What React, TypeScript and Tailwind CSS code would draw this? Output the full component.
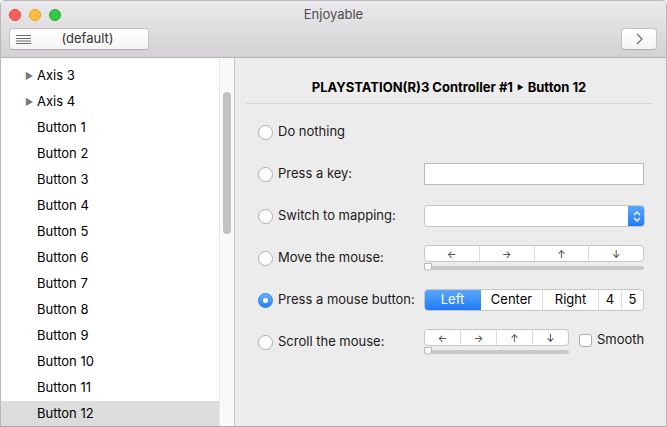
import React from 'react';

const FONT = { fontFamily: 'Inter, "Noto Sans", "Liberation Sans", sans-serif' };

const items = ['Axis 3', 'Axis 4', ...Array.from({ length: 12 }, (_, i) => `Button ${i + 1}`)];

function Radio({ on }: { on?: boolean }) {
  if (on) {
    return (
      <span className="flex h-[15px] w-[15px] shrink-0 items-center justify-center rounded-full bg-gradient-to-b from-[#69b1fd] to-[#1f7ff6] border border-[#2f86f4]">
        <span className="h-[5px] w-[5px] rounded-full bg-white" />
      </span>
    );
  }
  return <span className="h-[15px] w-[15px] shrink-0 rounded-full border border-[#adadad] bg-white" />;
}

function Slider({ width }: { width: string }) {
  return (
    <div className={`relative mt-[3px] h-[6px] ${width}`}>
      <div className="absolute left-0 right-0 top-[1px] h-[4px] rounded-full bg-[#c9c9c9]" />
      <div className="absolute left-0 top-[-2px] h-[8px] w-[8px] rounded-[2px] rounded-b-full border border-[#b8b8b8] bg-white" />
    </div>
  );
}

function Arrows({ width }: { width: string }) {
  return (
    <div className={`flex h-[17px] ${width} overflow-hidden rounded-[4px] border border-[#c6c6c6] bg-white text-[10px] leading-none text-[#333]`}>
      {['←', '→', '↑', '↓'].map((a, i) => (
        <div key={a} className={`flex flex-1 items-center justify-center ${i > 0 ? 'border-l border-[#dcdcdc]' : ''}`}>
          {a}
        </div>
      ))}
    </div>
  );
}

function Row({ label, on, children }: { label: string; on?: boolean; children?: React.ReactNode }) {
  return (
    <div className="flex h-[42px] items-center">
      <div className="flex w-[166px] items-center gap-[5px]">
        <Radio on={on} />
        <span>{label}</span>
      </div>
      {children}
    </div>
  );
}

export default function App() {
  return (
    <div className="h-[427px] w-[667px] overflow-hidden bg-white text-[13px] text-[#1a1a1a]" style={FONT}>
      <div className="flex h-full flex-col overflow-hidden rounded-t-[5px] border border-b-[#a9a9a9] border-[#b9b9b9]">
        {/* title bar + toolbar */}
        <div className="h-[57px] shrink-0 border-b border-[#b1b1b1] bg-gradient-to-b from-[#ebe9eb] to-[#d3d1d3]">
          <div className="relative flex h-[27px] items-center justify-center">
            <div className="absolute left-[8px] top-[8px] flex gap-[8px]">
              <span className="h-[12px] w-[12px] rounded-full border border-[#e2463f] bg-[#fc605c]" />
              <span className="h-[12px] w-[12px] rounded-full border border-[#e1a116] bg-[#fdbc40]" />
              <span className="h-[12px] w-[12px] rounded-full border border-[#2aa831] bg-[#34c84a]" />
            </div>
            <span className="mt-[1px] text-[13px] text-[#4c4c4c]">Enjoyable</span>
          </div>
          <div className="flex items-center justify-between pl-[8px] pr-[9px]">
            <div className="flex h-[22px] w-[140px] items-center rounded-[4px] border border-[#c4c4c4] border-b-[#b0b0b0] bg-gradient-to-b from-[#ffffff] to-[#f4f4f4] px-[6px]">
              <svg width="15" height="9" viewBox="0 0 15 9" className="shrink-0">
                <path d="M0 0.5H15M0 3.5H15M0 6H15M0 8.5H15" stroke="#6b6b6b" strokeWidth="1" />
              </svg>
              <span className="flex-1 pl-[2px] text-center text-[#333]">(default)</span>
            </div>
            <div className="flex h-[22px] w-[36px] items-center justify-center rounded-[4px] border border-[#c4c4c4] border-b-[#b0b0b0] bg-gradient-to-b from-[#ffffff] to-[#f4f4f4]">
              <svg width="7" height="12" viewBox="0 0 7 12">
                <path d="M1 1L6 6L1 11" fill="none" stroke="#6b6b6b" strokeWidth="1.2" />
              </svg>
            </div>
          </div>
        </div>

        {/* body */}
        <div className="flex min-h-0 flex-1">
          <div className="flex w-[234px] shrink-0 border-r border-[#c8c8c8]">
            <div className="w-[218px] pt-[5px]">
              {items.map((it, i) => {
                const sel = i === items.length - 1;
                return (
                  <div key={it} className={`flex h-[26px] shrink-0 items-center pl-[24px] ${sel ? 'bg-[#dcdcdc]' : ''}`}>
                    <span className="w-[12px] text-[9px] text-[#7a7a7a]">{it.startsWith('Axis') ? '▶' : ''}</span>
                    <span className="text-black">{it}</span>
                  </div>
                );
              })}
            </div>
            <div className="flex w-[15px] justify-center border-l border-[#e9e9e9] bg-[#f9f9f9] pt-[34px]">
              <div className="h-[142px] w-[8px] rounded-full bg-[#c2c2c2]" />
            </div>
          </div>

          <div className="flex-1 bg-[#ececec] pl-[11px] pr-[14px]">
            <div className="flex h-[46px] items-end justify-center border-b border-[#d6d6d6] pb-[6px] font-bold text-black">
              PLAYSTATION(R)3 Controller #1 <span className="mx-[4px] text-[7px] leading-[18px]">▶</span> Button 12
            </div>
            <div className="pl-[12px] pt-[7px]">
              <Row label="Do nothing" />
              <Row label="Press a key:">
                <div className="h-[22px] w-[220px] border border-[#b9b9b9] bg-white" />
              </Row>
              <Row label="Switch to mapping:">
                <div className="flex h-[22px] w-[221px] overflow-hidden rounded-[4px] border border-[#c6c6c6] bg-white">
                  <div className="flex-1" />
                  <div className="-my-px -mr-px flex w-[17px] items-center justify-center rounded-r-[4px] bg-gradient-to-b from-[#5ba8fc] to-[#1b78f5]">
                    <svg width="8" height="13" viewBox="0 0 8 13">
                      <path d="M1 5L4 2L7 5M1 8L4 11L7 8" fill="none" stroke="white" strokeWidth="1.3" />
                    </svg>
                  </div>
                </div>
              </Row>
              <Row label="Move the mouse:">
                <div className="flex flex-col">
                  <Arrows width="w-[220px]" />
                  <Slider width="w-[220px]" />
                </div>
              </Row>
              <Row label="Press a mouse button:" on>
                <div className="flex h-[22px] w-[220px] overflow-hidden rounded-[4px] border border-[#c6c6c6] bg-white text-black">
                  <div className="-my-px -ml-px flex w-[57px] items-center justify-center rounded-l-[4px] bg-gradient-to-b from-[#5ba8fc] to-[#1b78f5] text-white">Left</div>
                  <div className="flex w-[61px] items-center justify-center">Center</div>
                  <div className="flex w-[56px] items-center justify-center border-l border-[#dcdcdc]">Right</div>
                  <div className="flex w-[23px] items-center justify-center border-l border-[#dcdcdc]">4</div>
                  <div className="flex flex-1 items-center justify-center border-l border-[#dcdcdc]">5</div>
                </div>
              </Row>
              <Row label="Scroll the mouse:">
                <div className="flex flex-col">
                  <Arrows width="w-[145px]" />
                  <Slider width="w-[145px]" />
                </div>
                <div className="ml-[10px] flex items-center gap-[5px] pb-[4px]">
                  <span className="h-[13px] w-[13px] rounded-[3px] border border-[#adadad] bg-white" />
                  <span>Smooth</span>
                </div>
              </Row>
            </div>
          </div>
        </div>
      </div>
    </div>
  );
}
